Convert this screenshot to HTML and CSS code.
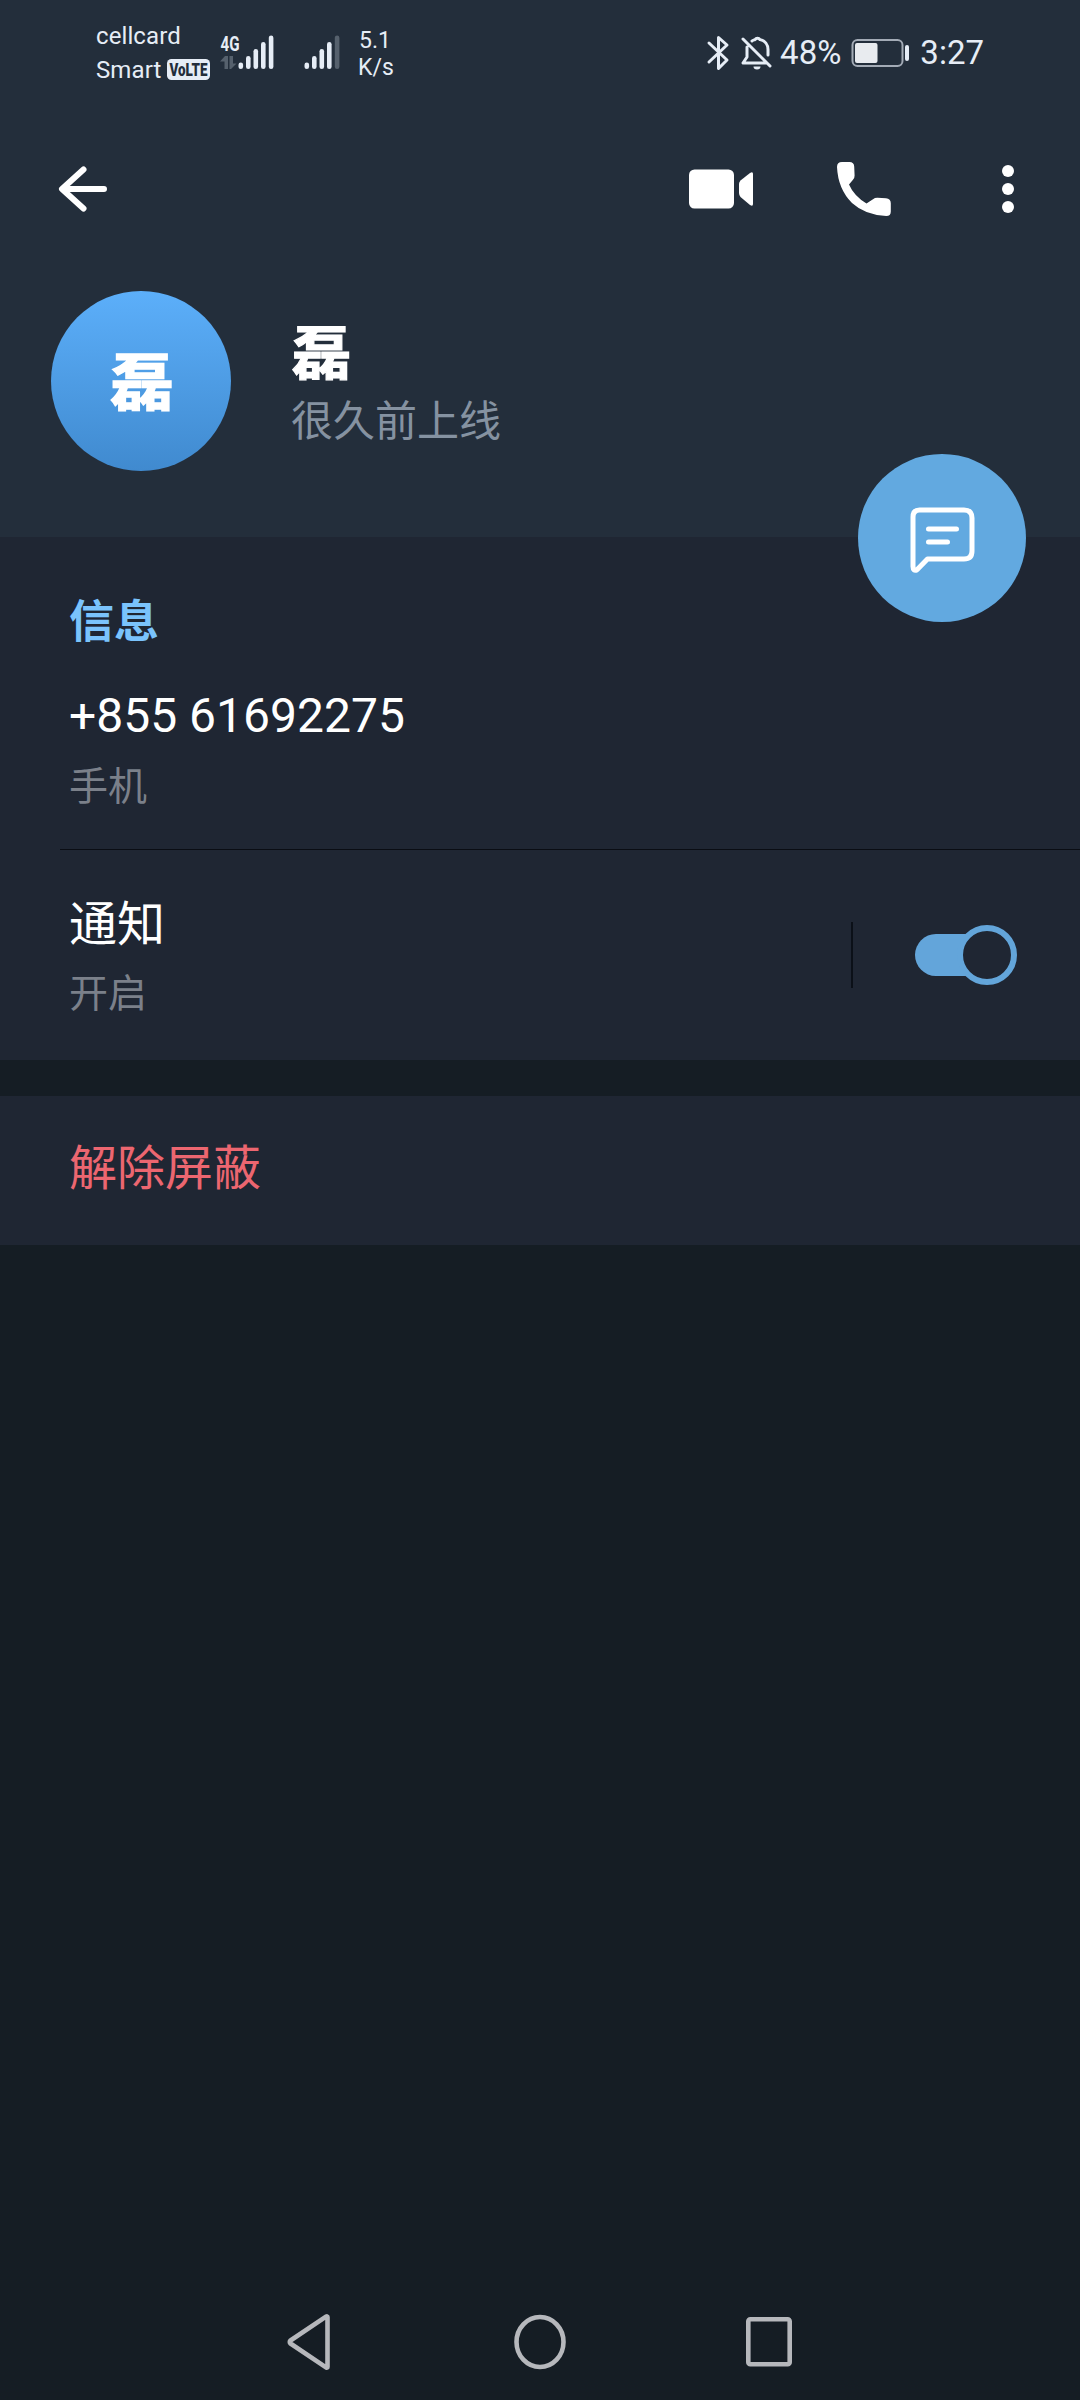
FILE: index.html
```html
<!DOCTYPE html>
<html lang="zh-CN">
<head>
<meta charset="utf-8">
<title>磊</title>
<link rel="stylesheet" href="styles.css">
</head>
<body>
<div class="screen">
  <header class="header">
    <div class="status">
      <div class="carriers">
        <span>cellcard</span>
        <span class="carrier-row">Smart
          <svg class="volte" width="43" height="21" viewBox="0 0 43 21"><rect width="43" height="21" rx="4.5" fill="#e6edf6"/><text x="2.5" y="17.3" textLength="38" lengthAdjust="spacingAndGlyphs" class="volte-text">VoLTE</text></svg>
        </span>
      </div>
      <svg class="signal-main" width="55" height="36" viewBox="0 0 55 36" fill="#e6edf6">
        <text x="0.5" y="17" textLength="19" lengthAdjust="spacingAndGlyphs" class="net-text">4G</text>
        <path d="M0 27.500l5-5.500h3v13H4.500v-7.500zM9.500 22h3.500v7.500h3.500L11 35H9.500z" fill="#56616d"/>
        <rect x="18.500" y="28.500" width="4.600" height="6.500" rx="2.300"/><rect x="26" y="22" width="4.600" height="13" rx="2.300"/><rect x="33.500" y="15" width="4.600" height="20" rx="2.300"/><rect x="41" y="8" width="4.600" height="27" rx="2.300"/><rect x="48.800" y="1.500" width="4.600" height="33.500" rx="2.300"/>
      </svg>
      <svg class="signal-second" width="37" height="36" viewBox="0 0 37 36" fill="#e6edf6">
        <rect x="0.500" y="28.500" width="4.600" height="6.500" rx="2.300"/><rect x="8" y="22" width="4.600" height="13" rx="2.300"/><rect x="15.500" y="15" width="4.600" height="20" rx="2.300"/><rect x="23" y="8" width="4.600" height="27" rx="2.300"/><rect x="30.800" y="1.500" width="4.600" height="33.500" rx="2.300" fill="#56616d"/>
      </svg>
      <div class="speed"><span>5.1</span><span>K/s</span></div>
      <div class="status-right">
        <svg class="bluetooth" width="22" height="36" viewBox="0 0 22 36" fill="none" stroke="#e6edf6" stroke-width="3" stroke-linejoin="round" stroke-linecap="round"><path d="M2 8l18 17-8.500 8.500v-31L20 10 2 27"/></svg>
        <svg class="bell" width="32" height="36" viewBox="0 0 32 36" fill="none" stroke="#e6edf6" stroke-width="3" stroke-linecap="round" stroke-linejoin="round"><path d="M2 4l27 27M6 12v10l-4 6h23M11 6c1-1 2-1 3-1.400a3 3 0 0 1 5 0c5 1 8 5 8 10V20"/><path d="M12.500 31.500h7a3.500 3 0 0 1-7 0z" fill="#e6edf6" stroke="none"/></svg>
        <span class="percent">48%</span>
        <svg class="battery" width="59" height="30" viewBox="0 0 59 30"><rect x="1.500" y="2" width="50" height="26" rx="5" fill="none" stroke="#a3abb6" stroke-width="2"/><rect x="4" y="5" width="22.500" height="20" rx="2" fill="#e8ebef"/><rect x="54" y="7" width="4" height="16" rx="2" fill="#e6edf6"/></svg>
        <span class="clock">3:27</span>
      </div>
    </div>
    <nav class="toolbar">
      <svg class="back" width="50" height="48" viewBox="0 0 50 48" fill="none" stroke="#fff" stroke-width="6" stroke-linecap="round" stroke-linejoin="round"><path d="M26.500 4.500L5 24l21.500 19.500M6 24h41"/></svg>
      <svg class="video" width="66" height="40" viewBox="0 0 66 40" fill="#fff"><rect x="0" y="0.500" width="45" height="39" rx="5.500"/><path d="M50 15q0-2 1.500-3.500L61 4q3-2 3 1v30q0 3-3 1l-9.500-8Q50 26 50 24z"/></svg>
      <svg class="phone" width="56" height="56" viewBox="0 0 56 56" fill="#fff"><path d="M6 1h7.500q4.500 0 4.700 4.500l.4 9q.1 2.800-1.800 4.500L13 23.500Q18 35 30.500 42.500l6.500-4.300q2-1.500 4.500-1.400l8.500.4q4.800.3 4.800 5v8.300q0 4.500-4.500 4.500Q29 54 16 42 2 28 1 6q0-5 5-5z"/></svg>
      <svg class="more" width="12" height="50" viewBox="0 0 12 50" fill="#fff"><circle cx="6" cy="7" r="6"/><circle cx="6" cy="25" r="6"/><circle cx="6" cy="43" r="6"/></svg>
    </nav>
    <div class="profile">
      <div class="avatar">磊</div>
      <div class="identity">
        <h1 class="name">磊</h1>
        <p class="last-seen">很久前上线</p>
      </div>
    </div>
    <button class="fab" aria-label="发消息">
      <svg width="66" height="66" viewBox="0 0 66 66" fill="none" stroke="#fff" stroke-width="5" stroke-linecap="round" stroke-linejoin="round"><path d="M9.500 3H54q8 0 8 8v33q0 8-8 8H17.500L7 62.800q-4 1.500-4-3.300V10q0-7 6.500-7z"/><path d="M18.500 22h28M18.500 35h19"/></svg>
    </button>
  </header>
  <section class="card info">
    <h2 class="section-title">信息</h2>
    <p class="value phone-number">+855 61692275</p>
    <p class="label">手机</p>
    <div class="divider"></div>
    <div class="notify">
      <div class="notify-text">
        <p class="value">通知</p>
        <p class="label notify-label">开启</p>
      </div>
      <span class="separator"></span>
      <span class="switch"><span class="thumb"></span></span>
    </div>
  </section>
  <section class="card unblock">解除屏蔽</section>
  <footer class="nav">
    <svg width="46" height="58" viewBox="0 0 46 58" fill="none" stroke="#b6b8bc" stroke-width="4.600" stroke-linejoin="round"><path d="M41.500 4v50q0 1-1.500.3L4.500 30.500q-1.500-1.500 0-3L40 3.700q1.500-.7 1.500.3z"/></svg>
    <svg width="54" height="58" viewBox="0 0 54 58" fill="none" stroke="#b6b8bc" stroke-width="4.600"><ellipse cx="28" cy="29" rx="23.500" ry="25"/></svg>
    <svg width="48" height="58" viewBox="0 0 48 58" fill="none" stroke="#b6b8bc" stroke-width="4.600"><rect x="3.300" y="6.300" width="41.400" height="44.900" rx="2"/></svg>
  </footer>
</div>
</body>
</html>
```
FILE: styles.css
```css
* { box-sizing: border-box; margin: 0; padding: 0; }
body { background: #151d24; font-family: Roboto, "Noto Sans CJK SC", sans-serif; color: #fff; }
svg { display: block; flex: none; overflow: visible; }
.screen { width: 1080px; height: 2400px; display: flex; flex-direction: column; background: #151d24; }
.header { position: relative; height: 537px; background: #232e3b; }

.status { display: flex; height: 100px; padding: 0 96px; color: #e6edf6; }
.carriers { width: 124px; padding-top: 19px; font-size: 24px; line-height: 34px; white-space: nowrap; display: flex; flex-direction: column; }
.carriers span { letter-spacing: 0.1px; }
.carrier-row { display: flex; gap: 6px; }
.volte { margin-top: 6px; }
.volte-text { font: 900 18px Roboto, sans-serif; letter-spacing: 0; fill: #232e3b; }
.net-text { font: bold 21px Roboto, sans-serif; }
.signal-main { margin-top: 34px; }
.signal-second { margin: 34px 0 0 29px; }
.speed { display: flex; flex-direction: column; margin: 27px 0 0 17px; font-size: 23px; line-height: 27px; }
.speed span:first-child { padding-left: 1px; }
.status-right { display: flex; align-items: center; margin-left: auto; height: 106px; }
.bell { margin-left: 12px; }
.percent, .clock { font-size: 33px; line-height: 40px; }
.percent { margin-left: 7px; }
.battery { margin-left: 10px; }
.clock { margin-left: 10px; }

.toolbar { display: flex; align-items: center; height: 178px; padding-left: 57px; }
.video { margin-left: 582px; }
.phone { margin-left: 81px; }
.more { margin-left: 110px; }

.profile { display: flex; padding: 13px 0 0 51px; }
.avatar { width: 180px; height: 180px; padding-left: 2px; border-radius: 50%; background: linear-gradient(#5caffa, #408acf); font-size: 63px; font-weight: bold; line-height: 185px; text-align: center; -webkit-text-stroke: 1.5px #fff; }
.identity { padding: 32px 0 0 60px; }
.name { font-size: 59px; font-weight: bold; line-height: 64px; text-indent: 1px; -webkit-text-stroke: 1.2px #fff; }
.last-seen { font-size: 42px; line-height: 60px; color: #8592a1; margin-top: 5px; }
.fab { position: absolute; left: 858px; top: 454px; width: 168px; height: 168px; padding: 4px 0 0 2px; border: 0; border-radius: 50%; background: #62a9e0; display: grid; place-items: center; }

.card { background: #1f2633; }
.info { height: 523px; padding: 56px 0 0 69px; }
.section-title { font-size: 45px; font-weight: bold; line-height: 60px; color: #7ac3fc; }
.value { font-size: 48px; font-weight: 400; line-height: 60px; }
.phone-number { margin-top: 33px; }
.label { font-size: 39px; line-height: 52px; color: #7b808a; margin-top: 15px; }
.divider { height: 1px; margin: 36px 0 0 -9px; background: #0a0d14; }
.notify { display: flex; align-items: center; height: 210px; padding-right: 63px; }
.notify-text { flex: 1; height: 210px; padding-top: 45px; }
.notify-label { margin-top: 13px; }
.separator { width: 2px; height: 66px; background: #0b1018; margin-right: 62px; }
.switch { display: flex; align-items: center; justify-content: flex-end; width: 102px; height: 42px; border-radius: 21px; background: linear-gradient(#63a5da, #63a5da) left / 65px 42px no-repeat; }
.thumb { width: 60px; height: 60px; border: 6px solid #63a5da; border-radius: 50%; background: #1f2633; flex: none; }
.unblock { height: 149px; margin-top: 36px; padding-left: 69px; font-size: 48px; line-height: 146px; color: #ec6670; }

.nav { display: flex; justify-content: space-between; margin-top: auto; padding: 0 287px 29px 286px; }
```
